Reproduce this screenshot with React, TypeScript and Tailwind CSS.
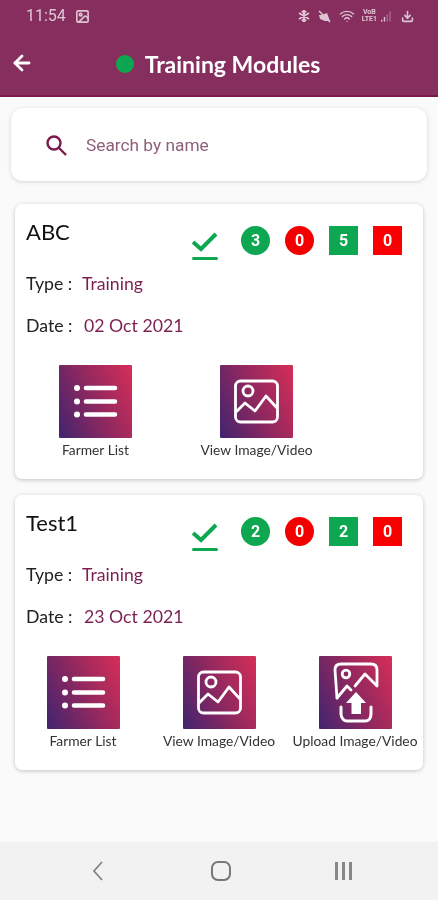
import { ArrowLeft, Download, Image, Wifi } from 'lucide-react'

const lato = 'font-["Lato","Open_Sans",sans-serif]'

function ListGlyph() {
  return (
    <svg viewBox="0 0 73 73" className="w-[73px] h-[73px]" fill="none" stroke="white" strokeWidth={4.6} strokeLinecap="round">
      <circle cx="18" cy="23" r="3" fill="white" stroke="none" />
      <circle cx="18" cy="36.5" r="3" fill="white" stroke="none" />
      <circle cx="18" cy="49.5" r="3" fill="white" stroke="none" />
      <path d="M27 23h29M27 36.5h29M27 49.5h29" />
    </svg>
  )
}

function ImageGlyph() {
  return (
    <svg viewBox="0 0 73 73" className="w-[73px] h-[73px]" fill="none" stroke="white" strokeWidth={2.8} strokeLinejoin="round">
      <rect x="15.5" y="16" width="42" height="41" rx="5" />
      <circle cx="28" cy="26" r="5" />
      <path d="M16 47l9-9 10 8 11-15 11 12" />
    </svg>
  )
}

function UploadGlyph() {
  return (
    <svg viewBox="0 0 73 73" className="w-[73px] h-[73px]" fill="none" stroke="white" strokeWidth={2.8} strokeLinejoin="round" strokeLinecap="round">
      <path d="M18 42l-2-28c0-4 2-6 6-6h30c4 0 6 2 6 6v16l-12-12-10 12" />
      <path d="M18 42l10-12 4 4" />
      <circle cx="27" cy="18" r="3.8" />
      <path d="M37 36l-10 11h5.5v11h9.5v-11H47z" fill="white" stroke="none" />
      <path d="M22 51v7c0 4 3 7 6 7h18c4 0 6-3 6-7v-7" strokeWidth={3} />
    </svg>
  )
}

function Tile({ kind, label }: { kind: 'list' | 'image' | 'upload'; label: string }) {
  return (
    <div className="flex flex-col items-center">
      <div className="w-[73px] h-[73px] rounded-[1px] bg-[linear-gradient(65deg,#40246f_0%,#90285f_50%,#d62e58_100%)]">
        {kind === 'list' && <ListGlyph />}
        {kind === 'image' && <ImageGlyph />}
        {kind === 'upload' && <UploadGlyph />}
      </div>
      <span className="mt-[4px] text-[13.8px] leading-4 text-[#333] whitespace-nowrap">{label}</span>
    </div>
  )
}

function Counter({ value, color, round }: { value: number; color: string; round?: boolean }) {
  return (
    <span
      className={`w-[29px] h-[29px] flex items-center justify-center text-white text-[16px] font-bold font-["Roboto",sans-serif] ${color} ${round ? 'rounded-full' : ''}`}
    >
      {value}
    </span>
  )
}

function ModuleCard({ name, date, counts, wide }: { name: string; date: string; counts: number[]; wide?: boolean }) {
  return (
    <div className="mx-[15px] h-[275px] rounded-[7px] bg-white shadow-[0_1px_4px_rgba(0,0,0,0.22)] pt-[14px]">
      <div className="flex px-[11px] h-[46px]">
        <span className="text-[22px] leading-[27px] text-[#111] w-[166px]">{name}</span>
        <div className="flex flex-col items-center w-[26px] mt-[14px]">
          <svg viewBox="0 0 26 20" className="w-[26px] h-[20px]" fill="none" stroke="#0ca750" strokeWidth={4}>
            <path d="M1 10l8 7L24 2" />
          </svg>
          <div className="w-[26px] h-[3px] bg-[#0ca750] rounded-full mt-[5px]" />
        </div>
        <div className="flex gap-[15px] ml-[23px] mt-[8px]">
          <Counter value={counts[0]} color="bg-[#0ca750]" round />
          <Counter value={counts[1]} color="bg-[#f20000]" round />
          <Counter value={counts[2]} color="bg-[#0ca750]" />
          <Counter value={counts[3]} color="bg-[#fb0000]" />
        </div>
      </div>
      <div className="px-[11px] mt-[8px] flex text-[17.7px] leading-6 h-6">
        <span className="w-[56px] text-[#222]">Type :</span>
        <span className="text-[#7b1f52]">Training</span>
      </div>
      <div className="px-[11px] mt-[18px] flex text-[17.7px] leading-6 h-6">
        <span className="w-[58px] text-[#222]">Date :</span>
        <span className="text-[#7b1f52]">{date}</span>
      </div>
      {wide ? (
        <div className="grid grid-cols-3 mt-[27px]">
          <Tile kind="list" label="Farmer List" />
          <Tile kind="image" label="View Image/Video" />
          <Tile kind="upload" label="Upload Image/Video" />
        </div>
      ) : (
        <div className="grid grid-cols-[161px_161px] mt-[27px]">
          <Tile kind="list" label="Farmer List" />
          <Tile kind="image" label="View Image/Video" />
        </div>
      )}
    </div>
  )
}

export default function App() {
  return (
    <div className={`w-[438px] h-[900px] flex flex-col bg-[#fafafa] overflow-hidden blur-[0.4px] ${lato}`}>
      <header className="h-[97px] bg-[#862e5e] border-b-2 border-[#7a1650] shrink-0">
        <div className="h-[32px] flex items-center justify-between pl-[26px] pr-[24px] text-[#e8d5df] opacity-90">
          <div className="flex items-center gap-[9px]">
            <span className="text-[16px] font-['Roboto',sans-serif]">11:54</span>
            <Image className="w-[15px] h-[15px]" strokeWidth={2.6} />
          </div>
          <div className="flex items-center gap-[6px]">
            {/* bluetooth reads like a snowflake at this size */}
            <svg viewBox="0 0 14 14" className="w-[14px] h-[14px]" fill="none" stroke="currentColor" strokeWidth={2}>
              <path d="M7 1v12M2 4l10 6M12 4L2 10M5 2l2 2 2-2M5 12l2-2 2 2" />
            </svg>
            <svg viewBox="0 0 15 15" className="w-[15px] h-[15px]" fill="currentColor">
              <path d="M2 6h3l5-2 3 8H8L3 10z" />
              <path d="M2 2l11 11" stroke="currentColor" strokeWidth={1.6} />
            </svg>
            <Wifi className="w-[18px] h-[16px]" strokeWidth={2} />
            <span className="text-[7px] leading-[7px] font-bold font-['Roboto',sans-serif] text-center">
              VoB
              <br />
              LTE1
            </span>
            <svg viewBox="0 0 14 14" className="w-[13px] h-[14px] -ml-[2px]" fill="currentColor">
              <rect x="0" y="11" width="1.5" height="2" />
              <rect x="3" y="8" width="1.5" height="5" />
              <rect x="6" y="5" width="1.5" height="8" opacity="0.4" />
              <rect x="9" y="2" width="1.5" height="11" opacity="0.4" />
            </svg>
            <Download className="w-[13px] h-[15px] ml-px" strokeWidth={3} />
          </div>
        </div>
        <div className="relative h-[63px] flex items-center justify-center">
          <ArrowLeft className="absolute left-[10px] top-[19px] w-[24px] h-[24px] text-white" strokeWidth={2.8} />
          <div className="flex items-center gap-[11px] -ml-[2px]">
            <span className="w-[18px] h-[18px] rounded-full bg-[#0ca750]" />
            <span className="text-[23px] font-bold text-white leading-8">Training Modules</span>
          </div>
        </div>
      </header>

      <main className="flex-1 pt-[11px]">
        <div className="mx-[11px] h-[73px] rounded-[12px] bg-white shadow-[0_1px_4px_rgba(0,0,0,0.15)] flex items-center pl-[34px]">
          <svg viewBox="0 0 22 22" className="w-[22px] h-[22px]" fill="none" stroke="#7a1c4e" strokeWidth={2.4}>
            <circle cx="9" cy="9" r="6.5" />
            <path d="M14 14l7 7" />
          </svg>
          <span className="ml-[19px] mt-[2px] text-[17.3px] text-[#8f5f7a] font-['Roboto',sans-serif]">Search by name</span>
        </div>
        <div className="mt-[23px] flex flex-col gap-[16px]">
          <ModuleCard name="ABC" date="02 Oct 2021" counts={[3, 0, 5, 0]} />
          <ModuleCard name="Test1" date="23 Oct 2021" counts={[2, 0, 2, 0]} wide />
        </div>
      </main>

      <nav className="h-[58px] bg-[#f2f2f2] shrink-0 flex items-center text-[#777]">
        <div className="w-[196px] flex justify-center">
          <svg viewBox="0 0 14 20" className="w-[14px] h-[20px]" fill="none" stroke="#808080" strokeWidth={1.7}>
            <path d="M11 1L3 10l8 9" />
          </svg>
        </div>
        <div className="w-[50px] flex justify-center">
          <span className="w-[20px] h-[20px] rounded-[7px] border-2 border-[#777]" />
        </div>
        <div className="flex gap-[4px] ml-[89px]">
          <span className="w-[3px] h-[18px] bg-[#888]" />
          <span className="w-[3px] h-[18px] bg-[#888]" />
          <span className="w-[3px] h-[18px] bg-[#888]" />
        </div>
      </nav>
    </div>
  )
}
